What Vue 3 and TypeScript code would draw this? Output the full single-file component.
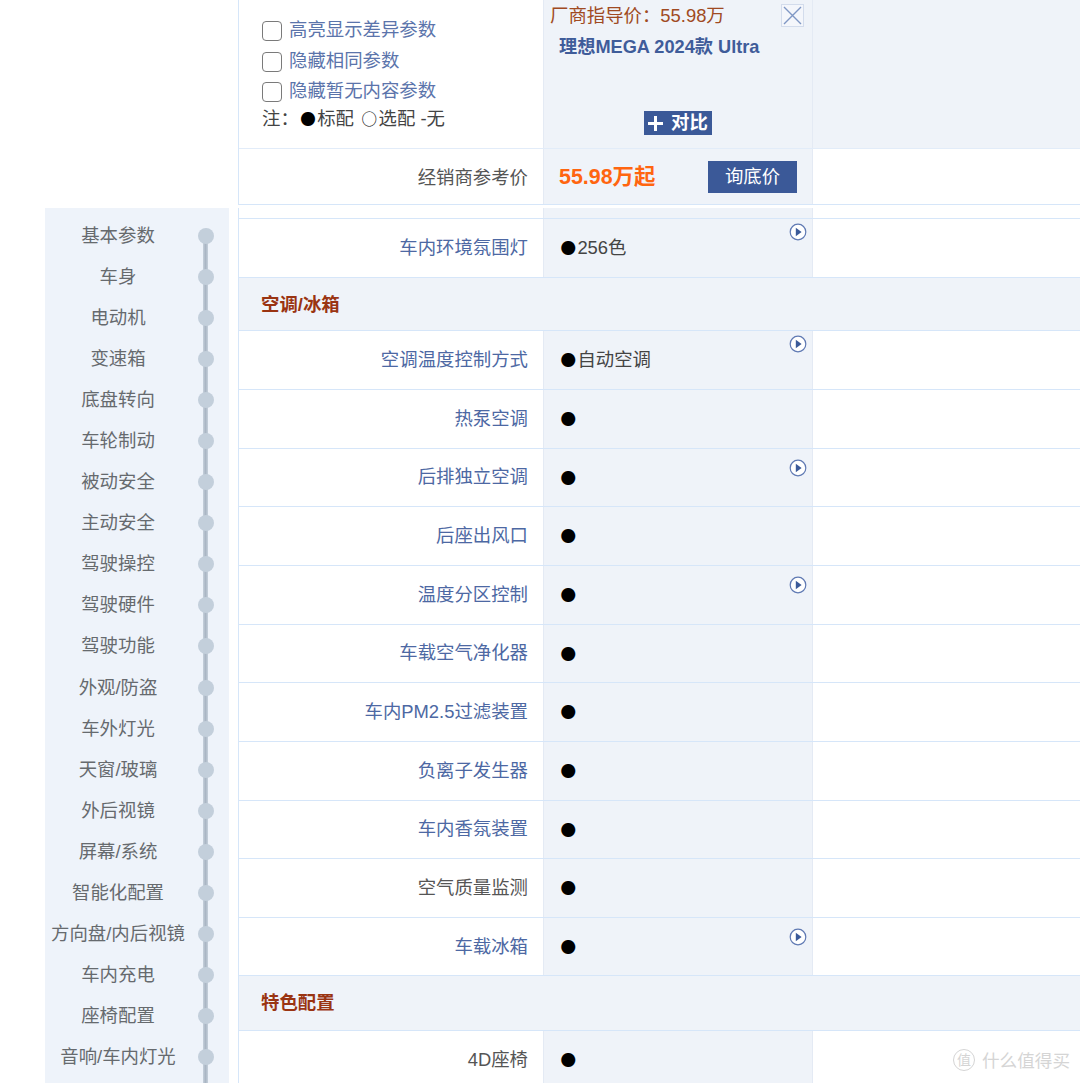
<script setup lang="ts">
const navItems: string[] = ['基本参数','车身','电动机','变速箱','底盘转向','车轮制动','被动安全','主动安全','驾驶操控','驾驶硬件','驾驶功能','外观/防盗','车外灯光','天窗/玻璃','外后视镜','屏幕/系统','智能化配置','方向盘/内后视镜','车内充电','座椅配置','音响/车内灯光']
const filters: string[] = ['高亮显示差异参数','隐藏相同参数','隐藏暂无内容参数']
interface Row { section?: string; label?: string; value?: string; play?: 'high' | 'low'; plain?: boolean; short?: boolean }
const rows: Row[] = [
  { label: '车内环境氛围灯', value: '256色', play: 'high' },
  { section: '空调/冰箱' },
  { label: '空调温度控制方式', value: '自动空调', play: 'high' },
  { label: '热泵空调' },
  { label: '后排独立空调', play: 'low' },
  { label: '后座出风口' },
  { label: '温度分区控制', play: 'low' },
  { label: '车载空气净化器' },
  { label: '车内PM2.5过滤装置' },
  { label: '负离子发生器' },
  { label: '车内香氛装置' },
  { label: '空气质量监测', plain: true },
  { label: '车载冰箱', play: 'low' },
  { section: '特色配置', short: true },
  { label: '4D座椅', plain: true },
]
</script>

<template>
  <div class="page">
    <nav class="side">
      <div class="rail"></div>
      <div v-for="item in navItems" :key="item" class="nav-item">
        <span class="nav-text">{{ item }}</span>
        <span class="nav-dot"></span>
      </div>
    </nav>
    <main class="table">
      <section class="head grid">
        <div class="filters">
          <label v-for="f in filters" :key="f" class="filter">
            <input type="checkbox" class="check" />
            <span class="filter-text">{{ f }}</span>
          </label>
          <p class="legend">注：<i class="glyph">●</i>标配 <i class="glyph ring">○</i>选配 -无</p>
        </div>
        <div class="col head-col">
          <p class="msrp">厂商指导价：55.98万</p>
          <p class="model">理想MEGA 2024款 Ultra</p>
          <button class="close" type="button" aria-label="关闭">
            <svg width="21" height="21" viewBox="0 0 21 21"><path d="M2 2 19 19M19 2 2 19" stroke="#7f97c4" stroke-width="1.4" fill="none" /></svg>
          </button>
          <button class="add" type="button">
            <svg width="15" height="15" viewBox="0 0 15 15"><path d="M7.5 0v15M0 7.5h15" stroke="#fff" stroke-width="3" fill="none" /></svg>
            <span>对比</span>
          </button>
        </div>
        <div class="head-rest"></div>
      </section>
      <section class="dealer grid">
        <div class="label plain">经销商参考价</div>
        <div class="col dealer-col">
          <span class="price">55.98万起</span>
          <button class="ask" type="button">询底价</button>
        </div>
        <div></div>
      </section>
      <div class="gap"></div>
      <div class="spacer grid"><div></div><div class="col"></div><div></div></div>
      <template v-for="(r, i) in rows" :key="i">
        <div v-if="r.section" class="section" :class="{ short: r.short }">{{ r.section }}</div>
        <div v-else class="row grid">
          <div class="label" :class="{ plain: r.plain }">{{ r.label }}</div>
          <div class="col value">
            <i class="glyph">●</i>{{ r.value }}
            <svg v-if="r.play" class="play" :class="r.play" width="18" height="18" viewBox="0 0 18 18">
              <circle cx="9" cy="9" r="7.8" fill="#fff" stroke="#5f79b3" stroke-width="1.2" />
              <path d="M6.8 4.8 12.6 9 6.8 13.2Z" fill="#3b5a99" />
            </svg>
          </div>
          <div></div>
        </div>
      </template>
    </main>
    <div class="mark">
      <span class="mark-logo">值</span>
      <span>什么值得买</span>
    </div>
  </div>
</template>

<style>
html, body { margin: 0; background: #fff; overflow: hidden; }
</style>

<style scoped>
.page {
  position: relative;
  width: 1080px;
  height: 1083px;
  overflow: hidden;
  display: flex;
  font-family: "Liberation Sans", "Noto Sans CJK SC", sans-serif;
  font-size: 18.4px;
  color: #444;
}
p { margin: 0; }
i { font-style: normal; }
button { font-family: inherit; border: 0; padding: 0; }

.side {
  position: relative;
  box-sizing: border-box;
  flex: none;
  width: 184px;
  height: 875px;
  margin: 208px 9px 0 45px;
  padding-top: 8px;
  background: #eef3fa;
}
.rail {
  position: absolute;
  left: 158px;
  top: 27px;
  bottom: 0;
  width: 5px;
  background: linear-gradient(90deg, #c6d0db, #aab6c4 50%, #c6d0db);
}
.nav-item {
  position: relative;
  height: 41.05px;
  line-height: 40px;
  text-align: center;
  width: 146px;
  color: #666a6e;
}
.nav-text { white-space: nowrap; }
.nav-dot {
  position: absolute;
  left: 153px;
  top: 12px;
  width: 16px;
  height: 16px;
  border-radius: 50%;
  background: #c3cfdb;
}

.table {
  flex: 1;
  min-width: 0;
  box-sizing: border-box;
  border-left: 1px solid #d6e6f9;
}
.grid {
  display: grid;
  grid-template-columns: 304px 270px 1fr;
}
.col {
  position: relative;
  box-sizing: border-box;
  background: #eff3f9;
  border-left: 1px solid #e4eaf4;
  border-right: 1px solid #e4eaf4;
}
.head { height: 148px; }
.filters { padding: 15px 0 0 23px; }
.filter {
  display: flex;
  align-items: center;
  gap: 7px;
  height: 30.5px;
  color: #5b74ab;
}
.filter-text { margin-bottom: 4px; }
.check {
  appearance: none;
  box-sizing: border-box;
  width: 20px;
  height: 20px;
  margin: 2px 0 0;
  border: 1.6px solid #7a7a7a;
  border-radius: 4px;
  background: #fff;
}
.legend { margin-top: -3px; color: #444; line-height: 28px; white-space: nowrap; }
.glyph {
  display: inline-block;
  width: 18.4px;
  text-align: center;
  font-family: "Noto Sans CJK SC", sans-serif;
  font-size: 15.5px;
  color: #000;
}
.ring { margin-left: 1px; }
.head-col { padding: 3px 0 0 6px; }
.msrp { color: #a04a22; line-height: 26px; }
.model {
  margin: 5px 0 0 9px;
  color: #3f5c9a;
  font-weight: 700;
  font-size: 18.2px;
  line-height: 26px;
}
.close {
  position: absolute;
  top: 4px;
  right: 8px;
  display: flex;
  align-items: center;
  justify-content: center;
  box-sizing: border-box;
  width: 23px;
  height: 23px;
  background: #f4f6fb;
  border: 1px solid #d3dcec;
}
.add {
  position: absolute;
  left: 100px;
  top: 111px;
  box-sizing: border-box;
  width: 68px;
  height: 24px;
  padding-left: 4px;
  display: flex;
  align-items: center;
  gap: 8px;
  background: #3b5998;
  color: #fff;
  font-size: 18.4px;
  font-weight: 700;
  line-height: 24px;
}
.head-rest { background: #eff3f9; }

.dealer {
  height: 57px;
  box-sizing: border-box;
  border-top: 1px solid #e2ecf9;
  border-bottom: 1px solid #d6e6f9;
}
.dealer .label { padding-bottom: 1px; }
.dealer-col {
  display: flex;
  align-items: center;
  justify-content: space-between;
  padding: 0 15px;
}
.price { margin-bottom: 4px; color: #ff6510; font-size: 21.4px; font-weight: 700; }
.ask {
  width: 89px;
  height: 32px;
  padding-bottom: 3px;
  background: #3b5998;
  color: #fff;
  font-size: 18.4px;
}
.gap { height: 3px; margin-left: -1px; background: #fff; position: relative; }
.spacer { height: 11px; box-sizing: border-box; border-bottom: 1px solid #d6e6f9; }

.row {
  height: 58.642px;
  box-sizing: border-box;
  border-bottom: 1px solid #d6e6f9;
}
.label {
  padding: 0 15px 4px 0;
  text-align: right;
  align-self: center;
  color: #4d68a3;
}
.label.plain { color: #555; }
.value {
  display: block;
  padding-left: 15px;
  line-height: 57px;
  color: #444;
}
.play { position: absolute; right: 5px; }
.play.high { top: 4px; }
.play.low { top: 10px; }
.section {
  box-sizing: border-box;
  height: 53.76px;
  padding-left: 22px;
  line-height: 53px;
  background: #eff3f9;
  border-bottom: 1px solid #d6e6f9;
  color: #9a3412;
  font-weight: 700;
}
.section.short { height: 54.6px; line-height: 54px; }

.mark {
  position: absolute;
  right: 10px;
  bottom: 11px;
  display: flex;
  align-items: center;
  gap: 7px;
  color: #d5d5d5;
  font-size: 17.6px;
}
.mark-logo {
  box-sizing: border-box;
  width: 22px;
  height: 22px;
  border: 1px solid #d5d5d5;
  border-radius: 50%;
  font-size: 14px;
  line-height: 20px;
  text-align: center;
}
</style>
